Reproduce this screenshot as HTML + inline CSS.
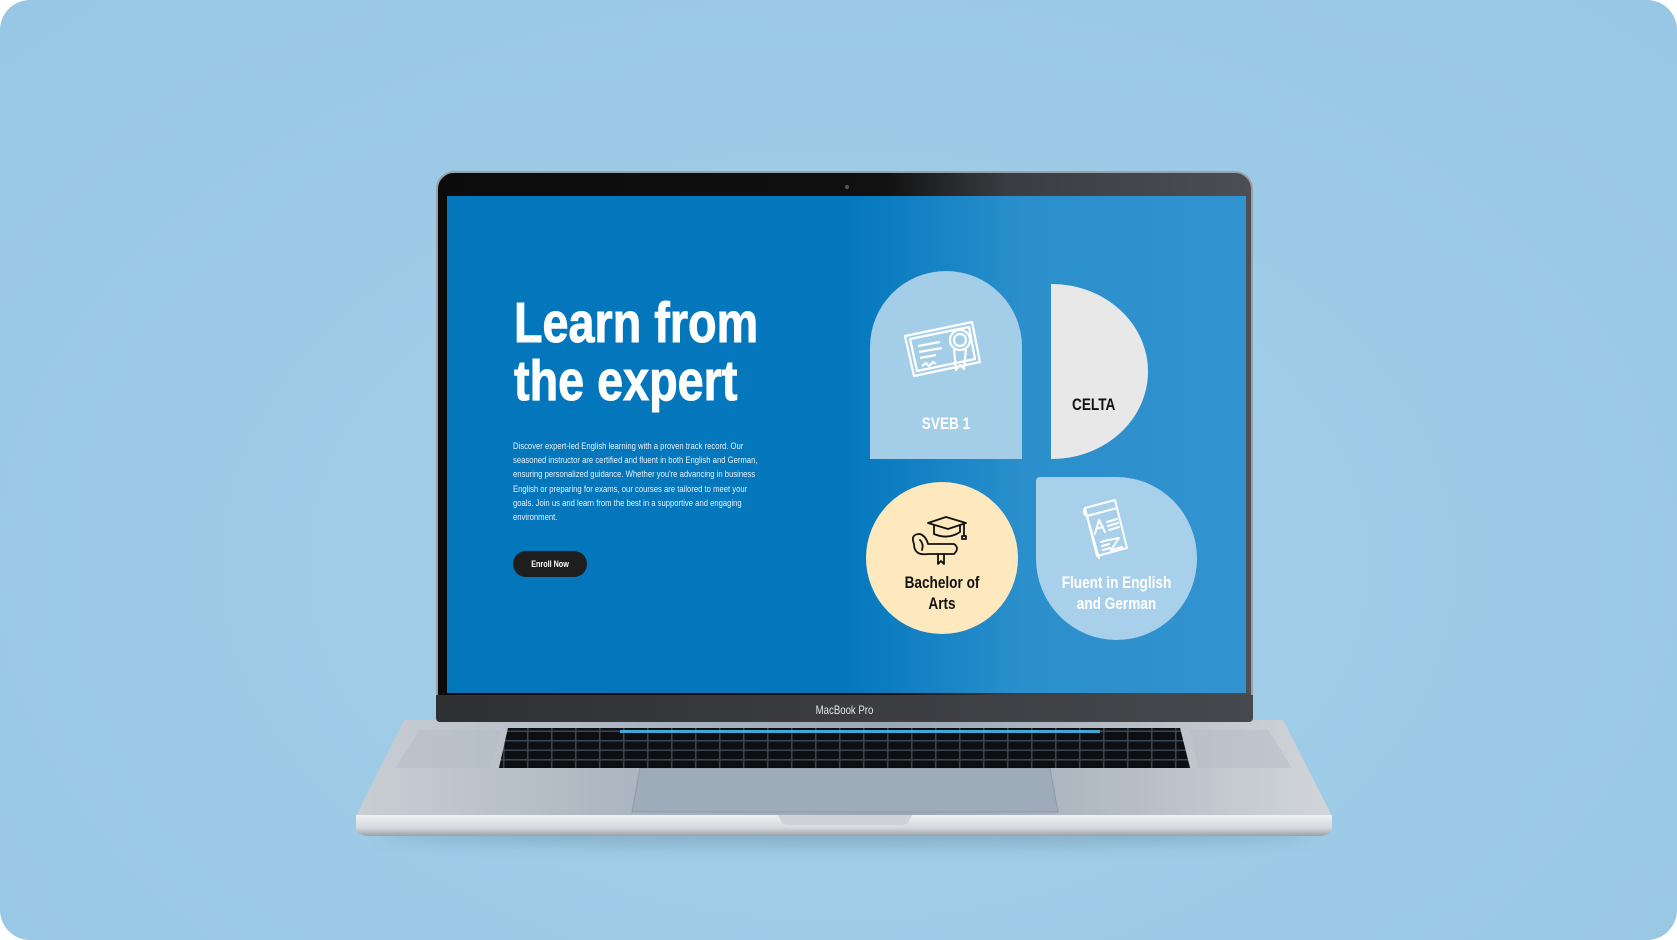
<!DOCTYPE html>
<html><head><meta charset="utf-8"><style>
*{margin:0;padding:0;box-sizing:border-box}
html,body{width:1677px;height:940px;background:#fff;overflow:hidden}
.bg{position:absolute;left:0;top:0;width:1677px;height:940px;border-radius:30px;background:radial-gradient(ellipse at 50% 60%,#a6d0e9 0%,#9ccae6 60%,#97c7e4 100%)}
.nar{font-family:"Liberation Sans",sans-serif;font-weight:bold}
.abs{position:absolute}
.sl{transform:scaleX(.8);transform-origin:0 0}
.sc{transform:scaleX(.8);transform-origin:50% 0}
</style></head><body>
<div class="bg"></div>
<div class="abs" style="left:380px;top:822px;width:930px;height:24px;border-radius:50%;background:rgba(60,90,110,.25);filter:blur(8px)"></div>
<svg class="abs" style="left:0;top:0" width="1677" height="940">
<defs>
<linearGradient id="bs" x1="0" y1="0" x2="1" y2="0">
<stop offset="0" stop-color="#c9ced4"/><stop offset=".3" stop-color="#aab4bf"/><stop offset=".55" stop-color="#9aa7b5"/><stop offset=".8" stop-color="#b7bec6"/><stop offset="1" stop-color="#d2d6da"/></linearGradient>
<linearGradient id="ed" x1="0" y1="0" x2="0" y2="1"><stop offset="0" stop-color="#eef0f2"/><stop offset=".6" stop-color="#d6d9dd"/><stop offset="1" stop-color="#9aa0a6"/></linearGradient>
<pattern id="keys" x="0" y="0" width="24" height="9.5" patternUnits="userSpaceOnUse"><rect x="0.5" y="0.5" width="22.5" height="8" rx="1" fill="#0e0f12"/></pattern>
</defs>
<path d="M404 720 L1283 720 L1330 812 L1332 820 L356 820 L358 812 Z" fill="url(#bs)"/>
<path d="M356 815 L1332 815 L1332 828 Q1330 836 1318 836 L370 836 Q358 836 356 828 Z" fill="url(#ed)"/>
<path d="M778 815 L912 815 L908 823 Q906 825 900 825 L790 825 Q784 825 782 823 Z" fill="#cfd3d7"/>
<path d="M640 768 L1050 768 L1058 812 L632 812 Z" fill="#9eabb9" stroke="#8e9aa7" stroke-width="1"/>
<path d="M508 728 L1180 728 L1190 768 L499 768 Z" fill="#3a4450"/>
<path d="M508 728 L1180 728 L1190 768 L499 768 Z" fill="url(#keys)"/>
<rect x="620" y="730" width="480" height="3" fill="#3fa8d8"/>
<path d="M420 730 L500 730 L490 768 L395 768 Z" fill="#b4bcc5" opacity=".5"/>
<path d="M1190 730 L1268 730 L1292 768 L1198 768 Z" fill="#b4bcc5" opacity=".5"/>
</svg>
<div class="abs" style="left:436px;top:171px;width:817px;height:551px;border-radius:18px 18px 4px 4px;background:linear-gradient(90deg,#0b0b0c 0%,#111 55%,#3a3d41 70%,#4b4e53 100%);border:2px solid #9aa1a8"></div>
<div class="abs" style="left:845px;top:185px;width:4px;height:4px;border-radius:50%;background:#555"></div>
<div class="abs" style="left:436px;top:695px;width:817px;height:27px;background:linear-gradient(90deg,#2e3033,#3a3c40 50%,#45484c);border-radius:0 0 4px 4px"></div>
<div class="abs sc" style="left:436px;top:703px;width:817px;text-align:center;font-family:'Liberation Sans',sans-serif;font-size:12px;color:#e6e6e6">MacBook Pro</div>
<div class="abs" style="left:447px;top:196px;width:799px;height:497px;overflow:hidden;background:linear-gradient(90deg,#0476bc 0%,#0477bd 50%,#1884c6 62%,#2b8fcc 72%,#3193cf 100%)">
  <div class="abs nar sl" style="left:67px;top:98px;color:#fff;font-size:57px;line-height:58px;white-space:nowrap;transform:scaleX(.82);-webkit-text-stroke:1px #fff">Learn from<br>the expert</div>
  <div class="abs sl" style="left:66px;top:244px;width:312px;color:#e6f1fa;font-family:'Liberation Sans',sans-serif;font-size:9.6px;line-height:14.2px">Discover expert-led English learning with a proven track record. Our seasoned instructor are certified and fluent in both English and German, ensuring personalized guidance. Whether you're advancing in business English or preparing for exams, our courses are tailored to meet your goals. Join us and learn from the best in a supportive and engaging environment.</div>
  <div class="abs" style="left:66px;top:355px;width:74px;height:26px;border-radius:13px;background:#1e1e1f"></div>
  <div class="abs nar sc" style="left:66px;top:355px;width:74px;color:#fff;font-size:9px;line-height:26px;text-align:center">Enroll Now</div>
  <div class="abs" style="left:423px;top:75px;width:152px;height:188px;border-radius:76px 76px 0 0;background:#a4cde8"></div>
  <svg class="abs" style="left:455px;top:122px" width="84" height="72" viewBox="0 0 84 72" fill="none" stroke="#fff" stroke-width="2.2" stroke-linejoin="round">
    <path d="M3 18 L70 4 L78 44 L12 58 Z"/><path d="M8 21 L67 9 L73 41 L15 53 Z"/>
    <path d="M16 28 L38 24 M17 34 L40 30 M18 40 L34 37"/><path d="M20 48 l4 -3 3 3 4 -4 3 2"/>
    <circle cx="58" cy="22" r="10"/><circle cx="58" cy="22" r="6"/>
    <path d="M52 31 L54 52 L58 47 L62 51 L64 30"/>
  </svg>
  <div class="abs nar sc" style="left:423px;top:218px;width:152px;text-align:center;color:#fff;font-size:17px">SVEB 1</div>
  <div class="abs" style="left:604px;top:88px;width:97px;height:175px;border-radius:0 97px 97px 0/0 88px 88px 0;background:#e8e8e8"></div>
  <div class="abs nar sl" style="left:625px;top:199px;color:#111;font-size:17px">CELTA</div>
  <div class="abs" style="left:419px;top:286px;width:152px;height:152px;border-radius:50%;background:#fde9bd"></div>
  <svg class="abs" style="left:461px;top:318px" width="62" height="52" viewBox="0 0 62 52" fill="none" stroke="#111" stroke-width="1.8" stroke-linejoin="round" stroke-linecap="round">
    <path d="M20 9 L38 3 L58 9 L40 15 Z"/><path d="M26 12 L26 20 Q40 26 52 18 L52 11"/><path d="M56 10 L56 22"/><path d="M54 22 h4 v3 h-4z"/>
    <path d="M6 30 Q2 20 12 20 Q18 22 20 30 L46 30 Q52 34 46 40 L20 40 Q6 42 6 30 Z"/><path d="M12 26 Q16 30 14 36"/>
    <path d="M30 40 L30 50 L33 47 L36 50 L36 40"/>
  </svg>
  <div class="abs nar sc" style="left:419px;top:376px;width:152px;text-align:center;color:#111;font-size:17px;line-height:21px">Bachelor of<br>Arts</div>
  <div class="abs" style="left:589px;top:281px;width:161px;height:163px;border-radius:4px 50% 50% 50%;background:#a8d0ea"></div>
  <svg class="abs" style="left:634px;top:302px" width="54" height="62" viewBox="0 0 54 62" fill="none" stroke="#fff" stroke-width="2" stroke-linejoin="round" stroke-linecap="round">
    <path d="M4 10 L34 2 L46 50 L16 58 Z"/><path d="M4 10 Q1 16 6 18 L36 10"/><path d="M6 18 L18 60"/>
    <path d="M14 36 L18 22 L24 34 M15 31 L22 29"/><path d="M26 24 L36 21 M27 28 L37 25 M28 32 L38 29"/>
    <path d="M28 42 L38 40 L30 52 L41 49"/><path d="M20 44 L27 42 M21 48 L28 46 M22 52 L29 50"/>
  </svg>
  <div class="abs nar sc" style="left:579px;top:376px;width:181px;text-align:center;color:#fff;font-size:17px;line-height:21px">Fluent in English<br>and German</div>
</div>
</body></html>
